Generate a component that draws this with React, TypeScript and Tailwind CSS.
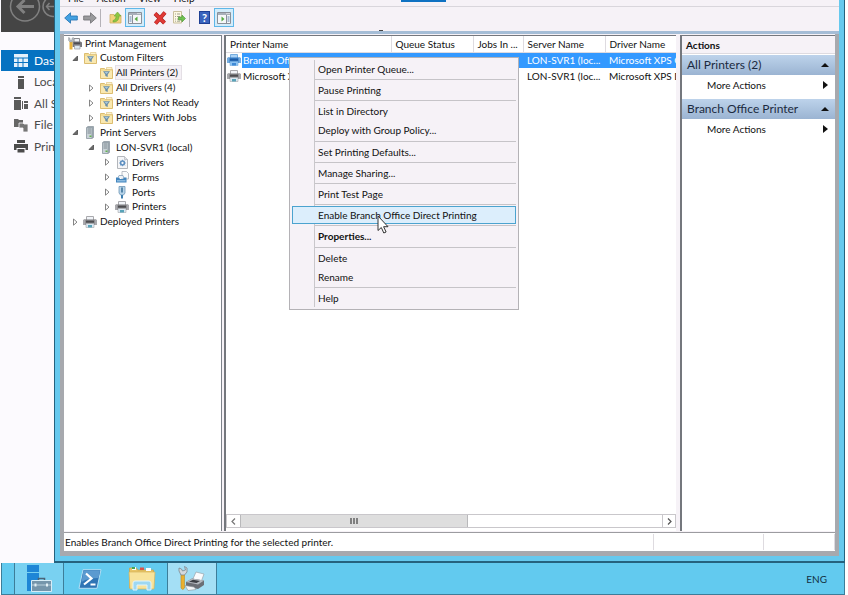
import type { ReactNode } from "react";

const mono = { fill: "none", stroke: "currentColor" };

/* ---------- icons ---------- */

function PrinterIcon({ blue = false }: { blue?: boolean }) {
  const body = blue ? "#2f74c0" : "#77777a";
  const dark = blue ? "#1d5ba4" : "#4d4d50";
  const edge = blue ? "#74acdf" : "#a9a9ad";
  return (
    <svg width="14" height="12" viewBox="0 0 14 12" className="shrink-0">
      <path d="M3.5 4V.5h7V4" fill={blue ? "#a9d2f7" : "#f1f4f8"} stroke={edge} />
      <path d="M0 4.500 1 3.500h12l1 1V9H0z" fill={body} />
      <path d="M0 4.500 1 3.500h1.500V9H0zM11.500 3.500H13l1 1V9h-2.500z" fill={edge} />
      <path d="M3 5h8v1.500H3z" fill={dark} />
      <path d="M3 7.500h8V11.500H3z" fill={blue ? "#8cc3f2" : "#dce8f2"} stroke={edge} strokeWidth=".6" />
      <path d="M5 9h4v2.500H5z" fill={blue ? "#3f8ad6" : "#58a3b8"} />
    </svg>
  );
}

function FilterFolderIcon() {
  return (
    <svg width="13" height="12" viewBox="0 0 13 12" className="shrink-0">
      <path d="M.5 1.500h4l1 1h7v9H.5z" fill="#f3dc94" stroke="#dcbd70" />
      <path d="M6.500.5h5.500v2H6.500z" fill="#fdf3cf" stroke="#dcc07a" strokeWidth=".6" />
      <path d="M1 4h11v7H1z" fill="#f9e8b0" />
      <path d="M3 4.300h7L7.700 7.600V10L5.300 9V7.600z" fill="#6b8ea6" />
      <path d="M4.500 5h4L6.500 7z" fill="#a9c8dc" />
    </svg>
  );
}

function ServerIcon() {
  return (
    <svg width="8" height="13" viewBox="0 0 8 13" className="shrink-0">
      <path d="M.5 1.500 2 .5h5.500v11L6 12.500H.5z" fill="#98a4ac" stroke="#909ca4" strokeWidth=".8" />
      <path d="M1 2h4.500v10H1z" fill="#c9d2d7" />
      <path d="M1.500 3h3.500M1.500 5h3.500M1.500 7h3.500" stroke="#7e8a92" />
      <path d="M3.500 9.500H5.500v1.500H3.500z" fill="#63b34f" />
    </svg>
  );
}

function ManagementIcon() {
  return (
    <svg width="14" height="13" viewBox="0 0 14 13" className="shrink-0">
      <path d="M6 5.500V1.500h5.500v4" fill="#eef1f5" stroke="#8c8c90" />
      <path d="M4.500 5 5.500 4.500h7l1.500 1V10H4.500z" fill="#77777c" />
      <path d="M6 5.500h6V7H6z" fill="#4d4d52" />
      <path d="M6.500 8.500h5.500V12H6.500z" fill="#dce8f2" stroke="#9a9aa0" strokeWidth=".7" />
      <path d="M1.500 4h3v8.500h-3z" fill="#e8b23a" />
      <path d="M.5.500v3L2 5h2L5.500 3.500v-3L4 1v2H2V1z" fill="#b6bcc2" stroke="#8a9096" strokeWidth=".4" />
    </svg>
  );
}

function DriversIcon() {
  return (
    <svg width="11" height="13" viewBox="0 0 11 13" className="shrink-0">
      <path d="M.5.5h7L10.500 3.500v9H.5z" fill="#f5f6f8" stroke="#b3b6bb" />
      <path d="M7.500.5v3h3" fill="#dfe2e6" stroke="#b3b6bb" strokeWidth=".7" />
      <circle cx="5.500" cy="7" r="1.900" fill="none" stroke="#5d8fc0" strokeWidth="1.500" />
      <path d="M5.500 3.800v1M5.500 9.200v1M2.300 7h1M7.700 7h1M3.200 4.700l.8.8M7 8.500l.8.8M3.200 9.300l.8-.8M7 5.500l.8-.8" stroke="#5d8fc0" />
    </svg>
  );
}

function FormsIcon() {
  return (
    <svg width="13" height="12" viewBox="0 0 13 12" className="shrink-0">
      <path d="M6 .5h4.500l2 2V8H6z" fill="#fafbfc" stroke="#a9afb8" strokeWidth=".8" />
      <path d="M2 6.500l1-2h4l1 3" fill="#edf2f7" stroke="#8aa2ba" strokeWidth=".8" />
      <path d="M0 6.500h3l1 1.500h3l1-1.500h2.500V11.500H0z" fill="#4385bd" />
      <path d="M1 9h8.500v1.500H1z" fill="#8cbbe0" />
    </svg>
  );
}

function PortsIcon() {
  return (
    <svg width="8" height="13" viewBox="0 0 8 13" className="shrink-0">
      <path d="M1 .5h6v6.500L5.500 9h-3L1 7z" fill="#b9d6ea" stroke="#6f97b6" strokeWidth=".8" />
      <path d="M4 1.500v5" stroke="#366b93" strokeWidth="1.500" />
      <path d="M3 9h2v3.500H3z" fill="#3d7fb0" />
    </svg>
  );
}

function Expander({ open }: { open: boolean }) {
  return (
    <svg width="7" height="8" viewBox="0 0 7 8">
      {open ? (
        <path d="M5.500 2v4.500H1z" fill="#6a6a6a" stroke="#4a4a4a" strokeWidth=".8" />
      ) : (
        <path d="M1.500 1v6.200L5 4.100z" fill="#fff" stroke="#777" strokeWidth=".9" />
      )}
    </svg>
  );
}

/* ---------- server manager, behind the console ---------- */

const tileIcon = (
  <svg width="14" height="13" viewBox="0 0 14 13">
    <path d="M0 0h14v3.500H0zM0 4.500h3.500V8H0zM4.500 4.500h4V8h-4zM9.500 4.500H14V8H9.500zM0 9h3.500v4H0zM4.500 9h4v4h-4zM9.500 9H14v4H9.500z" fill="#e5f1fb" />
  </svg>
);
const localIcon = (
  <svg width="14" height="13" viewBox="0 0 14 13">
    <path d="M4 0h6v2H4zM4 3h6v10H4z" fill="#555" />
  </svg>
);
const serversIcon = (
  <svg width="14" height="13" viewBox="0 0 14 13">
    <path d="M0 0h7v2H0zM0 3h7v10H0zM8 4h1v8H8zM10 4h4v2h-4zM10 7h4v5h-4z" fill="#5a5a5a" />
  </svg>
);
const fileIcon = (
  <svg width="14" height="13" viewBox="0 0 14 13">
    <path d="M0 0h4l1 1h4v3H7v4H0z" fill="#666" />
    <path d="M5 4h4l1 1h4v8H9V9H5z" fill="#777" stroke="#fcfafe" strokeWidth=".8" />
  </svg>
);
const printIcon = (
  <svg width="14" height="13" viewBox="0 0 14 13">
    <path d="M3 0h8v3H3zM0 4h14v6h-2.500V8h-9v2H0zM3.500 9h7v3.500h-7z" fill="#4c4c4c" />
  </svg>
);

const sections: { label: string; icon: ReactNode }[] = [
  { label: "Dashboard", icon: tileIcon },
  { label: "Local Server", icon: localIcon },
  { label: "All Servers", icon: serversIcon },
  { label: "File and Storage", icon: fileIcon },
  { label: "Print Services", icon: printIcon },
];

function ServerManager() {
  return (
    <aside className="w-[54px] shrink-0 overflow-hidden bg-[#fcfafe] pl-px">
      <div className="mb-[18px] h-8 overflow-hidden bg-[#454545]">
        <svg width="53" height="32" viewBox="1 0 53 32" {...mono} className="text-[#808080]">
          <circle cx="25" cy="6.500" r="14.500" strokeWidth="1.500" />
          <path d="M34 6.500H18M24.500 0 18 6.500 24.500 13" strokeWidth="3" />
          <circle cx="53" cy="6.500" r="10" strokeWidth="1.500" />
          <path d="M47 6.500h8M49.500 3 46.500 6.500l3 3.500" strokeWidth="1.500" />
        </svg>
      </div>
      <nav className="flex h-[107px] flex-col justify-between">
        {sections.map((s, i) => (
          <button
            key={s.label}
            className={`flex h-[21px] items-center gap-[6px] pl-[13px] text-left text-[12px] whitespace-nowrap ${
              i === 0 ? "bg-[#0672c1] text-white" : "text-[#4c4c4c]"
            }`}
          >
            <span className="shrink-0">{s.icon}</span>
            {s.label}
          </button>
        ))}
      </nav>
    </aside>
  );
}

/* ---------- toolbar ---------- */

function Arrow({ left, fill, edge }: { left?: boolean; fill: string; edge: string }) {
  return (
    <svg width="14" height="12" viewBox="0 0 14 12">
      <path
        d={left ? "M.7 6 6.500.8V4H13.300v4H6.500v3.200z" : "M13.300 6 7.500.8V4H.7v4h6.800v3.200z"}
        fill={fill}
        stroke={edge}
        strokeWidth=".9"
      />
    </svg>
  );
}

function PaneIcon({ right }: { right?: boolean }) {
  return (
    <svg width="14" height="12" viewBox="0 0 14 12">
      <path d="M.5.5h13v11H.5z" fill="#f6f7f9" stroke="#8a9099" />
      <path d="M1 1h12v2H1z" fill="#a9b0ba" />
      <path d="M9.500 1.500h1M11.500 1.500h1" stroke="#fff" />
      <path d={right ? "M9.500 3v8.500" : "M4.500 3v8.500"} stroke="#8a9099" />
      <path d={right ? "M10.500 5h2M10.500 7h2M10.500 9h2" : "M1.500 5h2M1.500 7h2M1.500 9h2"} stroke="#5f82ad" />
      <path d={right ? "M4.500 4.500v5L7.500 7z" : "M9.500 4.500v5L6.500 7z"} fill="#56ab43" />
    </svg>
  );
}

function Toolbar() {
  const plain = "grid h-[18px] w-[19px] place-items-center";
  const pressed = "grid h-[19px] w-5 place-items-center border border-[#5fb7e8] bg-[#d3ecfa]";
  return (
    <div className="flex h-[25px] items-center border-t border-[#d9d6dc] pb-[3px] pl-px">
      <button aria-label="Back" className={plain}>
        <Arrow left fill="#43a1e2" edge="#2b78b5" />
      </button>
      <button aria-label="Forward" className={plain}>
        <Arrow fill="#9a9a9d" edge="#77777a" />
      </button>
      <span className="mr-[5px] ml-px h-[18px] w-px bg-[#b5b2b8]" />
      <button aria-label="Up one level" className={plain}>
        <svg width="13" height="13" viewBox="0 0 13 13">
          <path d="M1 3.500h4l1 1h6v7.500H1z" fill="#f2d27b" stroke="#cfae62" strokeWidth=".8" />
          <path d="M4 9.500c2-.5 3-2 3-4.500H5L8.500 1 12 5h-2c0 4-2 6-6 6z" fill="#8cc640" stroke="#6fa53a" strokeWidth=".6" />
        </svg>
      </button>
      <button aria-label="Show or hide console tree" className={pressed}>
        <PaneIcon />
      </button>
      <button aria-label="Delete" className="ml-[5px] grid h-[18px] w-[19px] place-items-center">
        <svg width="14" height="14" viewBox="0 0 14 14">
          <path d="M2 2.500 11.500 12M12 1.500 2.500 12.500" stroke="#a81e1c" strokeWidth="4" />
          <path d="M2 2.500 11.500 12M12 1.500 2.500 12.500" stroke="#e03a36" strokeWidth="2.800" />
        </svg>
      </button>
      <button aria-label="Export list" className={plain}>
        <svg width="14" height="13" viewBox="0 0 14 13">
          <path d="M1.500.5h8v11.500h-8z" fill="#fdf8e3" stroke="#c9bf9c" />
          <path d="M3 3h1M5 3h3M3 5.500h1M5 5.500h3M3 8h1M5 8h3M3 10.200h1M5 10.200h3" stroke="#8a8a7c" strokeWidth=".8" />
          <path d="M6.500 6h3.500V4l3.500 3.500L10 11V9H6.500z" fill="#6fc04f" stroke="#4b9636" strokeWidth=".6" />
        </svg>
      </button>
      <span className="mr-[5px] ml-px h-[18px] w-px bg-[#b5b2b8]" />
      <button aria-label="Help" className={plain}>
        <span className="grid h-[13px] w-[11px] place-items-center border border-[#1e3f94] bg-[#3a63bd] text-[11px] leading-none font-bold text-white">
          ?
        </span>
      </button>
      <button aria-label="Show or hide action pane" className={pressed}>
        <PaneIcon right />
      </button>
    </div>
  );
}

/* ---------- console tree ---------- */

type Node = { label: string; icon: ReactNode; depth: number; open?: boolean; selected?: boolean };

const nodes: Node[] = [
  { label: "Print Management", icon: <ManagementIcon />, depth: 0 },
  { label: "Custom Filters", icon: <FilterFolderIcon />, depth: 1, open: true },
  { label: "All Printers (2)", icon: <FilterFolderIcon />, depth: 2, selected: true },
  { label: "All Drivers (4)", icon: <FilterFolderIcon />, depth: 2, open: false },
  { label: "Printers Not Ready", icon: <FilterFolderIcon />, depth: 2, open: false },
  { label: "Printers With Jobs", icon: <FilterFolderIcon />, depth: 2, open: false },
  { label: "Print Servers", icon: <ServerIcon />, depth: 1, open: true },
  { label: "LON-SVR1 (local)", icon: <ServerIcon />, depth: 2, open: true },
  { label: "Drivers", icon: <DriversIcon />, depth: 3, open: false },
  { label: "Forms", icon: <FormsIcon />, depth: 3, open: false },
  { label: "Ports", icon: <PortsIcon />, depth: 3, open: false },
  { label: "Printers", icon: <PrinterIcon />, depth: 3, open: false },
  { label: "Deployed Printers", icon: <PrinterIcon />, depth: 1, open: false },
];

const indent = ["pl-px", "pl-[7px]", "pl-[23px]", "pl-[39px]"];

function ConsoleTree() {
  return (
    <nav className="w-[158px] shrink-0 border-t border-r border-[#7d828a] bg-white pl-px">
      <ul className="flex h-[193px] flex-col justify-between">
        {nodes.map((n) => (
          <li key={n.label} className={`flex h-[14px] items-center whitespace-nowrap ${indent[n.depth]}`}>
            {n.depth > 0 && (
              <span className="w-[9px] shrink-0">{n.open !== undefined && <Expander open={n.open} />}</span>
            )}
            <button className="flex items-center">
              <span className="grid w-[18px] place-items-center">{n.icon}</span>
              <span
                className={`border pr-[3px] leading-[13px] ${
                  n.selected ? "border-[#e4dfe5] bg-[#f5f1f6]" : "border-transparent"
                }`}
              >
                {n.label}
              </span>
            </button>
          </li>
        ))}
      </ul>
    </nav>
  );
}

/* ---------- printer list ---------- */

const columns = ["Printer Name", "Queue Status", "Jobs In ...", "Server Name", "Driver Name"];
const printers = [
  ["Branch Office Printer", "Ready", "0", "LON-SVR1 (loc...", "Microsoft XPS Class Driver"],
  ["Microsoft XPS Document Writer", "Ready", "0", "LON-SVR1 (loc...", "Microsoft XPS Document Writer"],
];

const menuGroups = [
  ["Open Printer Queue..."],
  ["Pause Printing"],
  ["List in Directory", "Deploy with Group Policy..."],
  ["Set Printing Defaults..."],
  ["Manage Sharing..."],
  ["Print Test Page"],
  ["Enable Branch Office Direct Printing"],
  ["Properties..."],
  ["Delete", "Rename"],
  ["Help"],
];

function ContextMenu() {
  return (
    <div className="absolute top-[21px] left-[63px] z-10 h-[253px] w-[230px] border border-[#b4b2b6] bg-[#f6f2f7] p-[2px]">
      <div className="absolute top-[2px] bottom-[2px] left-6 w-px bg-[#c9c7cb]" />
      <div className="flex h-full flex-col justify-between">
        {menuGroups.map((group, g) => [
          g > 0 && <hr key={`rule-${g}`} className="ml-[22px] border-t border-[#c6c4c8]" />,
          ...group.map((item) => (
            <button
              key={item}
              className={`relative flex h-[18px] items-center border pl-[25px] text-left ${
                item.startsWith("Enable") ? "border-[#4ba3cf] bg-[#dceefc]" : "border-transparent"
              } ${item === "Properties..." ? "font-bold" : ""}`}
            >
              {item}
            </button>
          )),
        ])}
      </div>
      <svg width="12" height="19" viewBox="0 0 12 19" className="absolute top-[157px] left-[87px]">
        <path d="M1 1v14.500l3.300-3 2.500 5.500 2.300-1-2.500-5.300h4.400z" fill="#fff" stroke="#333" strokeWidth="1" />
      </svg>
    </div>
  );
}

function PrinterList() {
  return (
    <section className="relative flex min-w-0 flex-1 flex-col border-t border-l-2 border-[#74777d] bg-white">
      <div className="min-h-0 flex-1 overflow-hidden">
        <table className="w-[560px] table-fixed border-collapse text-left whitespace-nowrap">
          <colgroup>
            <col className="w-[165px]" />
            <col className="w-[82px]" />
            <col className="w-[50px]" />
            <col className="w-[82px]" />
            <col />
          </colgroup>
          <thead>
            <tr className="h-4">
              {columns.map((c) => (
                <th key={c} className="border-r border-b border-[#dedbe0] p-0 pl-1 font-normal">
                  {c}
                </th>
              ))}
            </tr>
          </thead>
          <tbody>
            {printers.map((row, r) => (
              <tr
                key={row[0]}
                className={
                  r === 0
                    ? "h-4 bg-linear-to-r from-white from-[16px] to-[#3399ff] to-[16px] text-white"
                    : "h-4"
                }
              >
                {row.map((cell, c) => (
                  <td key={c} className="overflow-hidden p-0">
                    {c === 0 ? (
                      <span className="flex items-center gap-[2px] pl-px">
                        <PrinterIcon blue={r === 0} />
                        {cell}
                      </span>
                    ) : (
                      <span className="pl-1">{cell}</span>
                    )}
                  </td>
                ))}
              </tr>
            ))}
          </tbody>
        </table>
      </div>
      <div className="mb-[3px] flex h-[14px] shrink-0 border border-[#c9c7cb] bg-white">
        <button aria-label="Scroll left" className="grid w-[13px] shrink-0 place-items-center">
          <svg width="5" height="7" viewBox="0 0 5 7" {...mono} className="text-[#777]">
            <path d="M4 .5 1 3.500l3 3" strokeWidth="1.200" />
          </svg>
        </button>
        <div className="min-w-0 flex-1">
          <div className="flex h-full w-[54%] items-center justify-center gap-px border-x border-[#b9b9bb] bg-[#dedede]">
            <i className="h-[6px] w-[2px] bg-[#808080]" />
            <i className="h-[6px] w-[2px] bg-[#808080]" />
            <i className="h-[6px] w-[2px] bg-[#808080]" />
          </div>
        </div>
        <button
          aria-label="Scroll right"
          className="grid w-[13px] shrink-0 place-items-center border-l border-[#c9c7cb]"
        >
          <svg width="5" height="7" viewBox="0 0 5 7" {...mono} className="text-[#555]">
            <path d="M1 .5l3 3-3 3" strokeWidth="1.200" />
          </svg>
        </button>
      </div>
      <ContextMenu />
    </section>
  );
}

/* ---------- actions pane ---------- */

function ActionsPane() {
  return (
    <section className="w-[155px] shrink-0 border-t border-l-2 border-[#74777d] bg-white">
      <h2 className="mb-px h-[18px] border-b border-[#dedbe0] bg-[#f6f2f7] pl-1 leading-[18px] font-bold">Actions</h2>
      {["All Printers (2)", "Branch Office Printer"].map((title) => (
        <div key={title} className="mb-1">
          <button className="flex h-5 w-full items-center justify-between bg-linear-to-b from-[#bdd3eb] to-[#9bb4d2] pr-[6px] pl-[5px] text-left text-[12px] text-[#1b2a3f]">
            {title}
            <svg width="8" height="4" viewBox="0 0 8 4">
              <path d="M4 0l4 4H0z" fill="#111" />
            </svg>
          </button>
          <button className="flex h-5 w-full items-center justify-between pr-[7px] pl-[25px] text-left">
            More Actions
            <svg width="5" height="8" viewBox="0 0 5 8">
              <path d="M0 0l5 4-5 4z" fill="#111" />
            </svg>
          </button>
        </div>
      ))}
    </section>
  );
}

/* ---------- console window ---------- */

function ConsoleWindow() {
  return (
    <main className="mr-[3px] flex min-w-0 flex-1 flex-col border-r border-b-2 border-l border-[#25627e] bg-[#66c9ee] pr-[5px] pb-[5px] pl-[5px]">
      <div className="flex min-h-0 flex-1 flex-col border-x-4 border-b-[5px] border-[#a7a9ae] bg-[#f6f2f7]">
        <div className="relative -mx-1 bg-[#f6f2f7]">
          <nav className="flex h-[6px] items-end gap-[13px] overflow-hidden pl-2">
            {["File", "Action", "View", "Help"].map((m) => (
              <button key={m} className="h-4 shrink-0 leading-4">
                {m}
              </button>
            ))}
          </nav>
          <div className="absolute top-0 left-[341px] h-[2px] w-[45px] bg-[#0f72c2]" />
          <Toolbar />
          <div className="h-[3px] bg-[#a5bdd6]" />
          <div className="absolute bottom-[3px] left-[319px] h-px w-1 bg-[#444]" />
        </div>
        <div className="flex min-h-0 flex-1 pt-px">
          <ConsoleTree />
          <span className="w-[2px] shrink-0" />
          <PrinterList />
          <span className="w-1 shrink-0" />
          <ActionsPane />
        </div>
        <footer className="mt-px flex h-[19px] shrink-0 items-center border-t border-[#9c9ca0] bg-white">
          <p className="flex-1 pl-px whitespace-nowrap">Enables Branch Office Direct Printing for the selected printer.</p>
          <span className="h-4 w-[110px] border-l border-[#dedbe0]" />
          <span className="h-4 w-[72px] border-x border-[#dedbe0]" />
        </footer>
      </div>
    </main>
  );
}

/* ---------- taskbar ---------- */

function Taskbar() {
  return (
    <footer className="mr-[3px] ml-px flex h-8 shrink-0 items-stretch border border-t-0 border-[#3d7d99] bg-[#62caef]">
      <button
        aria-label="Server Manager"
        className="ml-3 grid w-[50px] place-items-center border-x border-[#3d7d99] bg-[#79d1f1]"
      >
        <svg width="28" height="27" viewBox="0 0 28 27">
          <path d="M2 0h12v7H2zM2 8h12v18H2z" fill="#1e86d6" />
          <path d="M13.500 16v-2.500h6V16" fill="none" stroke="#4a6478" strokeWidth="1.500" />
          <path d="M6.500 15.500h20v11h-20z" fill="#7595ab" stroke="#d8edf7" />
          <path d="M7 20h19" stroke="#b9cfdc" />
          <path d="M9.500 18.500h2v3h-2zM21 18.500h2v3h-2z" fill="#e4f0f6" />
        </svg>
      </button>
      <button aria-label="PowerShell" className="grid w-[52px] place-items-center">
        <svg width="24" height="20" viewBox="0 0 24 20">
          <path d="M5 .7h18L19 19.300H1z" fill="#2f75b5" stroke="#b5dff4" />
          <path d="M5.500 1.500h16.500L20.500 9C14 9 8 10 3.500 13z" fill="#5b9ad0" />
          <path d="M8 4.500l5.500 5L6 15.500" fill="none" stroke="#fff" strokeWidth="2.200" />
          <path d="M12.500 15.500h5" stroke="#fff" strokeWidth="2" />
        </svg>
      </button>
      <button aria-label="File Explorer" className="grid w-[51px] place-items-center">
        <svg width="28" height="25" viewBox="0 0 28 25">
          <path d="M1.500 2h7l1 2h16v18h-24z" fill="#e9c566" stroke="#c8a046" strokeWidth=".7" />
          <path d="M4 1h4v3H4zM18 2h5v3h-5z" fill="#fdfdfd" />
          <path d="M4 1h3v2H4z" fill="#3fa757" />
          <path d="M12 1.500h4v2.500h-4z" fill="#d9534a" />
          <path d="M1 6h26l-1 17H2z" fill="#f8e39b" stroke="#d5b35a" strokeWidth=".7" />
          <path d="M5 24v-7q0-2 2-2h14q2 0 2 2v7h-4v-5H9v5z" fill="#9ed8f2" stroke="#e1f4fc" strokeWidth="1" />
        </svg>
      </button>
      <button
        aria-label="Print Management"
        className="grid w-[50px] place-items-center border-x border-[#3d7d99] bg-[#a4dff5]"
      >
        <svg width="28" height="26" viewBox="0 0 28 26">
          <path d="M14 15 18 6l8 2-3 8z" fill="#fafbfd" stroke="#9aa3ab" strokeWidth=".7" />
          <path d="M8 16l6-3.500 12 2v4.500l-6 4-12-2.500z" fill="#6b6e75" />
          <path d="M8 16l6-3.500 12 2-6 4z" fill="#b4b8be" />
          <path d="M11 15.800l4-2 7 1.200-3.500 2z" fill="#3c3e44" />
          <path d="M7 19.500l9 1.500 2 2.500-8 1z" fill="#f4f6f8" stroke="#8a9096" strokeWidth=".6" />
          <path d="M3 8h3.500v14q-1.700 3-3.500 0z" fill="#eab02f" stroke="#b98d2e" strokeWidth=".6" />
          <path d="M1 2v3l2 4h3.500l2.500-3V2L6.500.5l1 3.500-3 1L3.500 3z" fill="#d3d9de" stroke="#727b83" strokeWidth=".7" />
        </svg>
      </button>
      <button className="mr-[17px] ml-auto text-[10px] text-[#12303f]">ENG</button>
    </footer>
  );
}

export default function App() {
  return (
    <div className="flex h-screen flex-col overflow-hidden bg-white font-[Lato,sans-serif] text-[10px] leading-[14px] text-[#111]">
      <div className="flex min-h-0 flex-1">
        <ServerManager />
        <ConsoleWindow />
      </div>
      <Taskbar />
    </div>
  );
}
